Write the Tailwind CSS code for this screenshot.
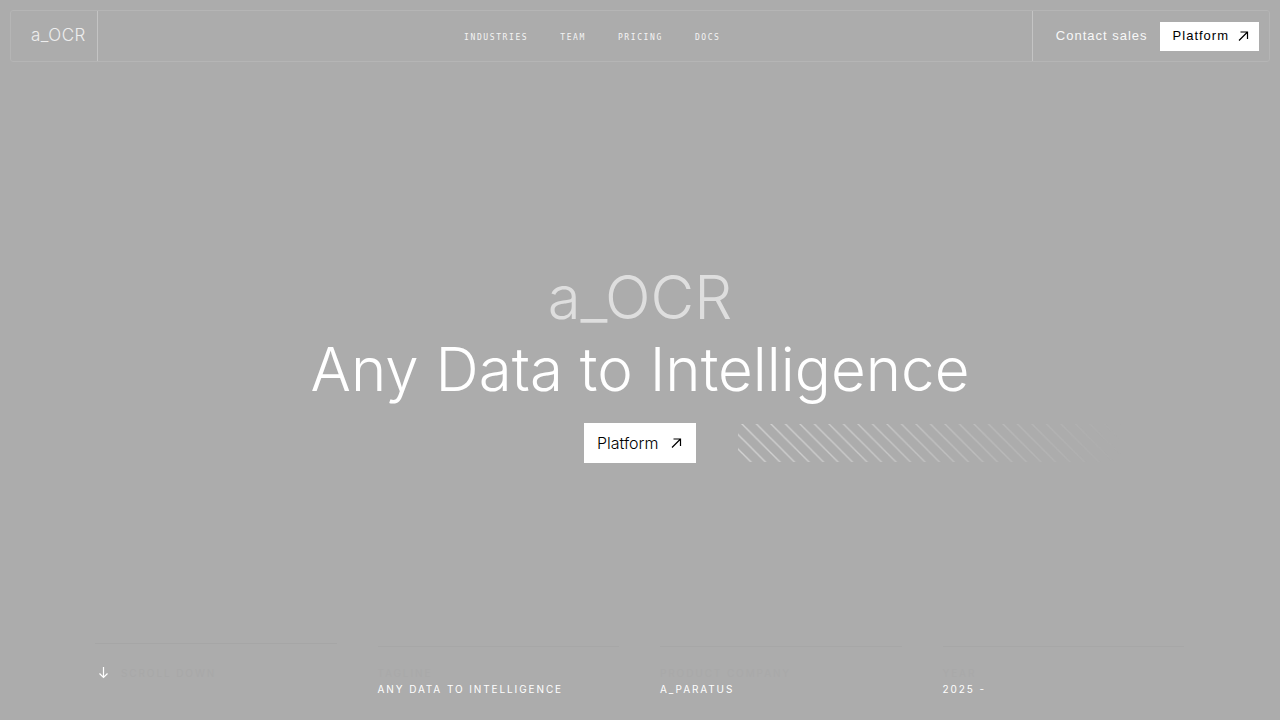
<!DOCTYPE html>
<html lang="en">
<head>
<meta charset="utf-8">
<meta name="viewport" content="width=device-width, initial-scale=1">
<title>a_OCR</title>
<script src="https://cdn.jsdelivr.net/npm/@tailwindcss/browser@4"></script>
</head>
<body class="flex min-h-screen flex-col bg-[#acacac] font-['Inter','Liberation_Sans',sans-serif] text-white">
<header class="mx-[10px] mt-[10px] flex h-[52px] items-stretch rounded-[3px] border border-[#b5b5b5]">
  <a href="#" class="flex items-center border-r border-[#c4c4c4] pl-5 pr-[11px] text-[17px] font-light tracking-[0.5px] text-[#eeeeee]">a_OCR</a>
  <nav aria-label="Main" class="flex flex-1 items-center justify-center gap-8 pl-[55px] pt-[3px] font-['DejaVu_Sans_Mono',monospace] text-[8px] tracking-[1.6px] text-[#f4f4f4]">
    <a href="#">INDUSTRIES</a>
    <a href="#">TEAM</a>
    <a href="#">PRICING</a>
    <a href="#">DOCS</a>
  </nav>
  <div class="flex items-center gap-3 border-l border-[#c4c4c4] pl-[23px] pr-[10px] font-['Liberation_Sans',sans-serif] text-[13px] tracking-[1px]">
    <a href="#" class="text-[#f8f8f8]">Contact sales</a>
    <button type="button" class="flex h-[29px] items-center gap-[9px] bg-white pl-[13px] pr-[10px] tracking-[1px] text-black">Platform
      <svg class="size-[11px]" viewBox="0 0 11 11" fill="none" stroke="currentColor" stroke-width="1.2" aria-hidden="true"><path d="M1 9.5 9.5 1M2.500 1h7v7"/></svg>
    </button>
  </div>
</header>
<main class="flex flex-1 flex-col items-center pt-[199px]">
  <h1 class="text-center text-[60px] leading-[72px] font-light"><span class="block text-[#dedede]">a_OCR</span>Any Data to Intelligence</h1>
  <div class="mt-[18px] grid w-full grid-cols-[1fr_auto_1fr] items-center">
    <button type="button" class="col-start-2 flex h-10 w-28 items-center justify-between bg-white pl-[13px] pr-[14px] text-base font-light text-black">Platform
      <svg class="size-[11px]" viewBox="0 0 11 11" fill="none" stroke="currentColor" stroke-width="1.2" aria-hidden="true"><path d="M1 9.5 9.5 1M2.500 1h7v7"/></svg>
    </button>
    <svg class="ml-[42px] h-[38px] w-[384px]" aria-hidden="true">
      <defs>
        <pattern id="hatch" width="14.5" height="14.5" patternUnits="userSpaceOnUse" patternTransform="translate(4 0)"><path d="M-2-2 16.5 16.5M-2 12.5 2 16.5M12.5-2 16.5 2" stroke="#d2d2d2" stroke-width="1.4"/></pattern>
        <linearGradient id="fade"><stop stop-color="white"/><stop offset=".35" stop-color="white" stop-opacity=".75"/><stop offset="1" stop-color="white" stop-opacity="0"/></linearGradient>
        <mask id="fade-mask"><rect width="100%" height="100%" fill="url(#fade)"/></mask>
      </defs>
      <rect width="100%" height="100%" fill="url(#hatch)" mask="url(#fade-mask)"/>
    </svg>
  </div>
</main>
<footer class="ml-[95px] mr-24 grid grid-cols-4 items-end gap-[41px] pb-[23px] text-[10px] leading-4 tracking-[1.9px]">
  <div class="h-[54px] border-t border-[#a6a6a6] pt-[21px]">
    <a href="#" class="flex items-center gap-3 pl-[3px] text-[#a8a8a8]">
      <svg class="h-4 w-[11px] text-white" viewBox="0 0 11 16" fill="none" stroke="currentColor" stroke-width="1.2" aria-hidden="true"><path d="M5.500 2v10.500M1.500 8.500l4 4 4-4"/></svg>SCROLL DOWN</a>
  </div>
  <dl class="border-t border-[#a7a7a7] pt-[18px]"><dt class="text-[#a9a9a9]">TAGLINE</dt><dd>ANY DATA TO INTELLIGENCE</dd></dl>
  <dl class="border-t border-[#a7a7a7] pt-[18px]"><dt class="text-[#a9a9a9]">PRODUCT COMPANY</dt><dd>A_PARATUS</dd></dl>
  <dl class="border-t border-[#a7a7a7] pt-[18px]"><dt class="text-[#a9a9a9]">YEAR</dt><dd>2025 -</dd></dl>
</footer>
</body>
</html>
